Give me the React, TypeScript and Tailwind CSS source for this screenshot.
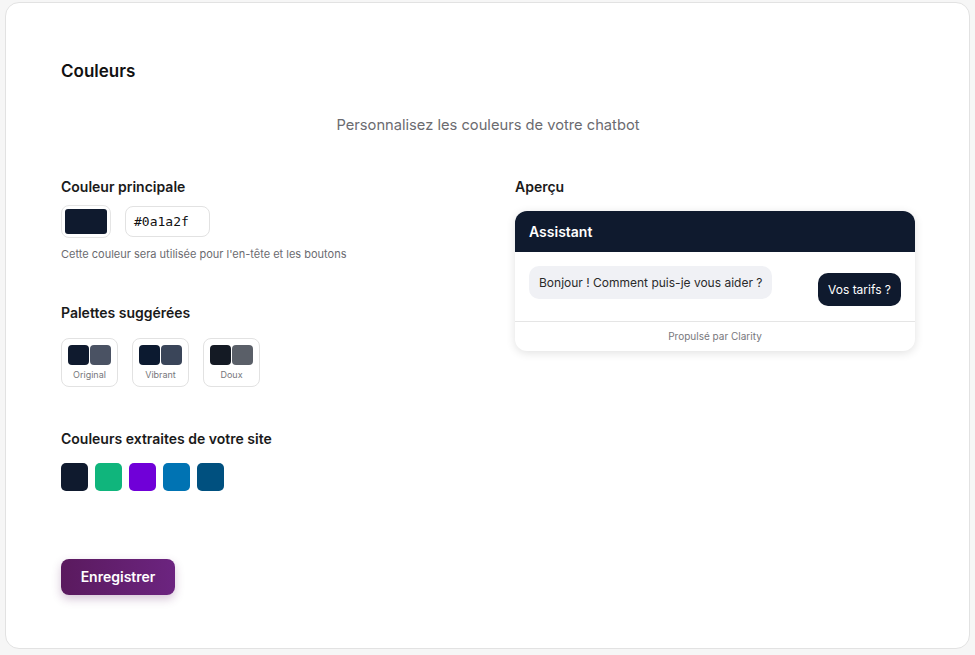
const palettes = [
  { name: 'Original', a: '#0f1a2e', b: '#4a5263' },
  { name: 'Vibrant', a: '#0c1a30', b: '#3a4559' },
  { name: 'Doux', a: '#141a24', b: '#5a5f68' },
]

const extracted = ['#0f1a2e', '#10b57c', '#7000d8', '#0073b3', '#00507f']

export default function App() {
  return (
    <div className="min-h-screen bg-[#f6f6f6] px-[5px] pt-[2px] pb-[5px] font-['Inter',sans-serif]">
      <div className="rounded-[14px] border border-[#e2e2e2] bg-white pl-[55px] pr-[54px] pt-[54px] pb-[53px]">
        <h2 className="text-[17px] font-semibold leading-7 text-[#111]">Couleurs</h2>
        <p className="mt-[29px] text-center text-[14.7px] text-[#6b6b70]">Personnalisez les couleurs de votre chatbot</p>

        <div className="mt-[41px] grid grid-cols-[400px_400px] justify-between">
          <div>
            <div className="text-[14px] font-semibold leading-5 text-[#1a1a1a]">Couleur principale</div>
            <div className="mt-[8px] flex items-center gap-[14px]">
              <div className="flex h-[33px] w-[50px] items-center justify-center rounded-lg border border-[#e5e5e5] bg-white p-[3px]">
                <div className="h-full w-full rounded-[3px] bg-[#0f1a2e]" />
              </div>
              <div className="flex h-[31px] w-[85px] items-center rounded-lg border border-[#e2e2e2] px-[8px] font-['DejaVu_Sans_Mono',monospace] text-[13px] text-[#111]">
                #0a1a2f
              </div>
            </div>
            <p className="mt-[8px] text-[11px] text-[#6b6b70]">Cette couleur sera utilisée pour l'en-tête et les boutons</p>

            <div className="mt-[40px] text-[14px] font-semibold leading-5 text-[#1a1a1a]">Palettes suggérées</div>
            <div className="mt-[15px] flex gap-[14px]">
              {palettes.map((p) => (
                <div key={p.name} className="flex h-[49px] w-[57px] flex-col items-center rounded-lg border border-[#e2e2e2] pt-[6px]">
                  <div className="flex gap-[1px]">
                    <div className="h-[20px] w-[21px] rounded-[4px]" style={{ backgroundColor: p.a }} />
                    <div className="h-[20px] w-[21px] rounded-[4px]" style={{ backgroundColor: p.b }} />
                  </div>
                  <div className="mt-[2px] text-[9px] leading-4 text-[#77777c]">{p.name}</div>
                </div>
              ))}
            </div>

            <div className="mt-[42px] text-[14px] font-semibold leading-5 text-[#1a1a1a]">Couleurs extraites de votre site</div>
            <div className="mt-[14px] flex gap-[7px]">
              {extracted.map((c) => (
                <div key={c} className="h-[28px] w-[27px] rounded-[5px]" style={{ backgroundColor: c }} />
              ))}
            </div>

            <button className="mt-[68px] h-[36px] w-[114px] rounded-lg bg-gradient-to-r from-[#5a1a5e] to-[#6c2480] text-[14px] font-semibold text-white shadow-[0_4px_10px_rgba(90,26,94,0.25)]">
              Enregistrer
            </button>
          </div>

          <div>
            <div className="text-[14px] font-semibold leading-5 text-[#1a1a1a]">Aperçu</div>
            <div className="mt-[14px] overflow-hidden rounded-xl bg-white shadow-[0_2px_10px_rgba(0,0,0,0.12)]">
              <div className="flex h-[41px] items-center bg-[#0f1a2e] px-[14px] text-[14px] font-semibold text-white">Assistant</div>
              <div className="flex items-start justify-between px-[14px] pt-[14px] pb-[15px]">
                <div className="rounded-[10px] bg-[#f0f1f5] px-[10px] py-[8px] text-[12px] leading-[17px] text-[#2a2a2a]">
                  Bonjour ! Comment puis-je vous aider ?
                </div>
                <div className="mt-[7px] rounded-[10px] bg-[#0f1a2e] px-[10px] py-[8px] text-[12px] leading-[17px] text-white">
                  Vos tarifs ?
                </div>
              </div>
              <div className="border-t border-[#e5e5e5] py-[8px] text-center text-[10px] leading-[13px] text-[#77777c]">Propulsé par Clarity</div>
            </div>
          </div>
        </div>
      </div>
    </div>
  )
}
